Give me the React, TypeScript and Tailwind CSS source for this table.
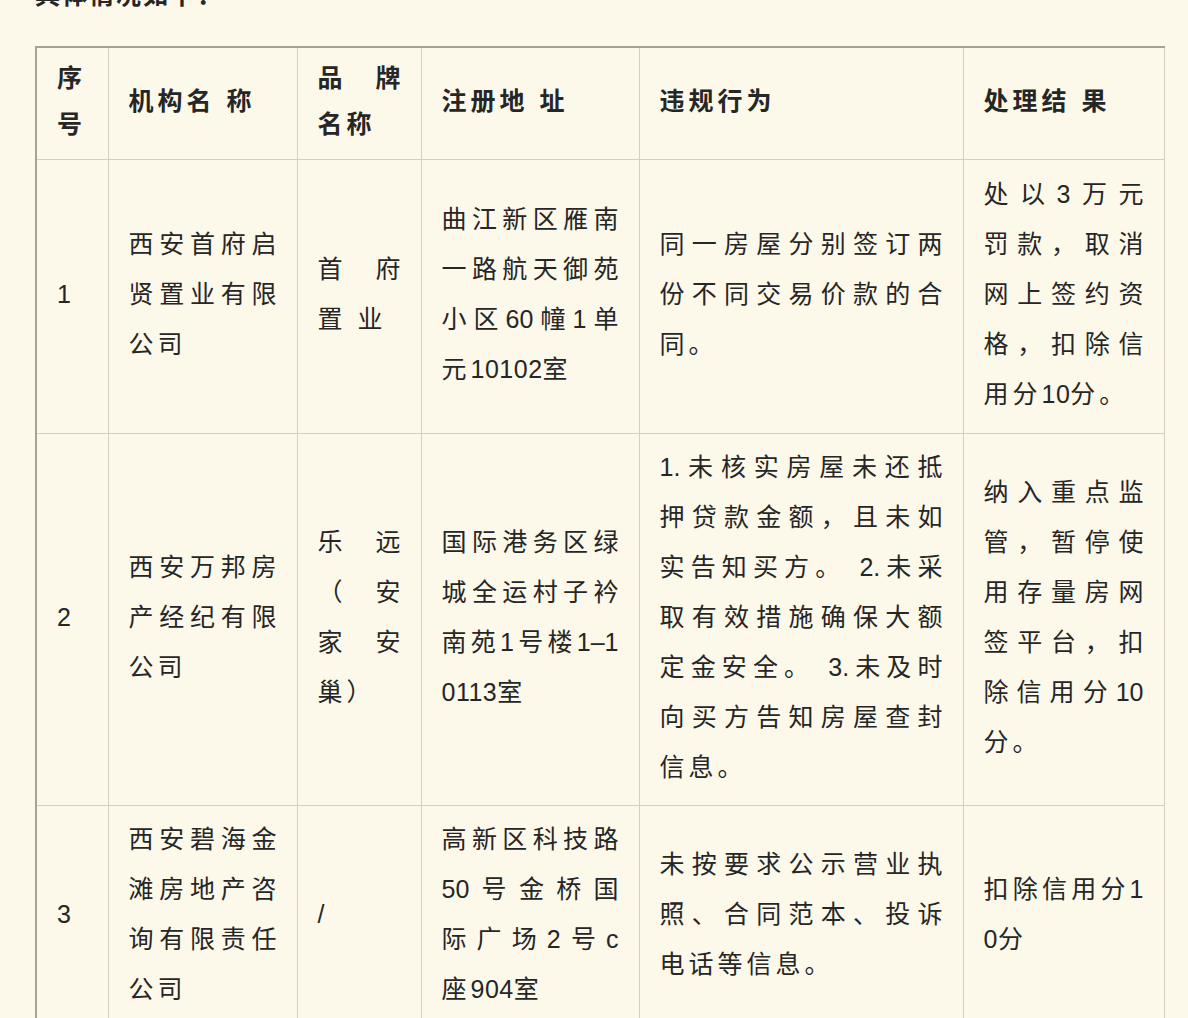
type Cell = string[];

const header: Cell[] = [
  ["序", "号"],
  ["机构名 称"],
  ["品 牌", "名称"],
  ["注册地 址"],
  ["违规行为"],
  ["处理结 果"],
];

const rows: { h: string; cells: Cell[] }[] = [
  {
    h: "h-[274px]",
    cells: [
      ["1"],
      ["西安首府启", "贤置业有限", "公司"],
      ["首 府", "置 业"],
      ["曲江新区雁南", "一路航天御苑", "小区60幢1单", "元10102室"],
      ["同一房屋分别签订两", "份不同交易价款的合", "同。"],
      ["处以3万元", "罚款，取消", "网上签约资", "格，扣除信", "用分10分。"],
    ],
  },
  {
    h: "h-[371px]",
    cells: [
      ["2"],
      ["西安万邦房", "产经纪有限", "公司"],
      ["乐 远", "（ 安", "家 安", "巢）"],
      ["国际港务区绿", "城全运村子衿", "南苑1号楼1–1", "0113室"],
      [
        "1.未核实房屋未还抵",
        "押贷款金额，且未如",
        "实告知买方。 2.未采",
        "取有效措施确保大额",
        "定金安全。 3.未及时",
        "向买方告知房屋查封",
        "信息。",
      ],
      ["纳入重点监", "管，暂停使", "用存量房网", "签平台，扣", "除信用分10", "分。"],
    ],
  },
  {
    h: "",
    cells: [
      ["3"],
      ["西安碧海金", "滩房地产咨", "询有限责任", "公司"],
      ["/"],
      ["高新区科技路", "50号金桥国", "际广场2号c", "座904室"],
      ["未按要求公示营业执", "照、合同范本、投诉", "电话等信息。"],
      ["扣除信用分1", "0分"],
    ],
  },
];

const widths = ["w-[72px]", "w-[189px]", "w-[124px]", "w-[218px]", "w-[324px]", "w-[201px]"];

// keep latin / digit runs tight, only CJK gets the wide tracking
function Tight({ text }: { text: string }) {
  const parts = text.split(/([0-9A-Za-z.\-–]+)/);
  return (
    <>
      {parts.map((p, i) =>
        /^[0-9A-Za-z.\-–]+$/.test(p) ? (
          <span key={i} className="tracking-[0.5px]">
            {p}
          </span>
        ) : (
          <span key={i}>{p}</span>
        )
      )}
    </>
  );
}

function Lines({ lines }: { lines: Cell }) {
  return (
    <>
      {lines.map((line, i) =>
        i < lines.length - 1 ? (
          <div key={i} className="text-justify [text-align-last:justify] tracking-[0px]">
            {line}
          </div>
        ) : (
          <div key={i} className="tracking-[4px]">
            <Tight text={line} />
          </div>
        )
      )}
    </>
  );
}

export default function App() {
  return (
    <div
      className="h-[1018px] overflow-hidden bg-[#fcf8ea] text-[#262626]"
      style={{ fontFamily: '"Liberation Sans", "Noto Sans CJK SC", sans-serif' }}
    >
      {/* cut-off intro line */}
      <p className="ml-[35px] -mt-[20px] text-[25px] leading-[30px] font-bold tracking-[2px]">
        具体情况如下：
      </p>

      <table className="ml-[35px] mt-[36px] w-[1128px] table-fixed border-collapse text-[25px]">
        <colgroup>
          {widths.map((w, i) => (
            <col key={i} className={w} />
          ))}
        </colgroup>
        <thead>
          <tr className="h-[109px]">
            {header.map((c, i) => (
              <th
                key={i}
                className={`border border-[#d3cfc4] border-t-2 border-t-[#a6a29a] px-[20px] pt-[7px] pb-[12px] text-left align-middle font-bold leading-[46px] ${
                  i === 0 ? "border-l-2 border-l-[#a6a29a]" : ""
                }`}
              >
                <Lines lines={c} />
              </th>
            ))}
          </tr>
        </thead>
        <tbody>
          {rows.map((r, ri) => (
            <tr key={ri} className={r.h}>
              {r.cells.map((c, i) => (
                <td
                  key={i}
                  className={`border border-[#d3cfc4] px-[20px] pt-[8px] pb-[13px] align-middle font-normal leading-[50px] ${
                    i === 0 ? "border-l-2 border-l-[#a6a29a]" : ""
                  }`}
                >
                  <Lines lines={c} />
                </td>
              ))}
            </tr>
          ))}
        </tbody>
      </table>
    </div>
  );
}
